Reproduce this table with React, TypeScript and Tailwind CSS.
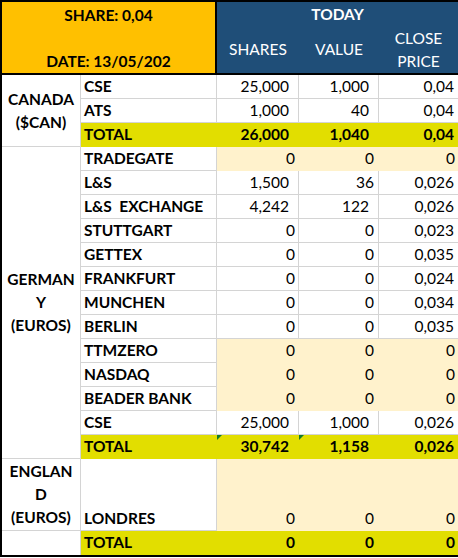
import React from "react";

type Row = {
  name: string;
  shares: string;
  value: string;
  price: string;
  fill?: "cream" | "total";
  marks?: boolean;
};

const canada: Row[] = [
  { name: "CSE", shares: "25,000", value: "1,000", price: "0,04" },
  { name: "ATS", shares: "1,000", value: "40", price: "0,04" },
  { name: "TOTAL", shares: "26,000", value: "1,040", price: "0,04", fill: "total" },
];

const germany: Row[] = [
  { name: "TRADEGATE", shares: "0", value: "0", price: "0", fill: "cream" },
  { name: "L&S", shares: "1,500", value: "36", price: "0,026" },
  { name: "L&S\u00a0 EXCHANGE", shares: "4,242", value: "122", price: "0,026" },
  { name: "STUTTGART", shares: "0", value: "0", price: "0,023" },
  { name: "GETTEX", shares: "0", value: "0", price: "0,035" },
  { name: "FRANKFURT", shares: "0", value: "0", price: "0,024" },
  { name: "MUNCHEN", shares: "0", value: "0", price: "0,034" },
  { name: "BERLIN", shares: "0", value: "0", price: "0,035" },
  { name: "TTMZERO", shares: "0", value: "0", price: "0", fill: "cream" },
  { name: "NASDAQ", shares: "0", value: "0", price: "0", fill: "cream" },
  { name: "BEADER BANK", shares: "0", value: "0", price: "0", fill: "cream" },
  { name: "CSE", shares: "25,000", value: "1,000", price: "0,026" },
  { name: "TOTAL", shares: "30,742", value: "1,158", price: "0,026", fill: "total", marks: true },
];

const padShares = (v: string) => (v === "0" ? "pr-[3px]" : "pr-[9px]");
const padValue = (v: string) => (v === "0" || v === "36" ? "pr-[4px]" : "pr-[9px]");
const padPrice = (v: string) => (v === "0" ? "pr-[3px]" : "pr-[4px]");

const fillClass = (fill?: Row["fill"]) =>
  fill === "total"
    ? "bg-[#E2DE00] border-[#E2DE00] font-bold"
    : fill === "cream"
    ? "bg-[#FFF2CC] border-[#FFF2CC]"
    : "bg-white border-[#D4D4D4]";

const Mark = () => (
  <span className="absolute left-0 top-0 h-0 w-0 border-t-[5px] border-r-[5px] border-t-[#137a2c] border-r-transparent" />
);

const DataRow = ({ row }: { row: Row }) => {
  const total = row.fill === "total";
  const numFill = fillClass(row.fill);
  const nameFill = total ? fillClass("total") : "bg-white border-[#D4D4D4]";
  return (
    <>
      <div className={`flex items-center border-b border-r pl-[3px] font-bold ${nameFill}`}>{row.name}</div>
      <div className={`relative flex items-center justify-end border-b border-r ${numFill} ${padShares(row.shares)}`}>
        {row.marks && <Mark />}
        {row.shares}
      </div>
      <div className={`relative flex items-center justify-end border-b border-r ${numFill} ${padValue(row.value)}`}>
        {row.marks && <Mark />}
        {row.value}
      </div>
      <div className={`flex items-center justify-end border-b ${numFill} ${padPrice(row.price)}`}>{row.price}</div>
    </>
  );
};

const Country = ({ lines, span }: { lines: string[]; span: string }) => (
  <div className={`flex flex-col items-center justify-center border-b border-r border-[#D4D4D4] bg-white font-bold leading-[23px] ${span}`}>
    {lines.map((l) => (
      <span key={l}>{l}</span>
    ))}
  </div>
);

export default function App() {
  return (
    <div
      className="w-[458px] h-[558px] overflow-hidden bg-white text-[15.5px] text-black"
      style={{ fontFamily: "Lato, 'Liberation Sans', sans-serif" }}
    >
      <div className="border-t-2 border-l-2 border-b-2 border-black">
        {/* Header */}
        <div className="flex h-[73px] border-b-2 border-black">
          <div className="flex w-[213px] flex-col justify-between bg-[#FFC000] font-bold">
            <div className="flex h-[27px] items-center justify-center">SHARE: 0,04</div>
            <div className="h-[24px] text-center leading-[24px]">DATE: 13/05/202</div>
          </div>
          <div className="w-[2px] bg-black" />
          <div className="flex flex-1 flex-col bg-[#1F4E78] text-white">
            <div className="flex h-[26px] items-center justify-center font-bold">TODAY</div>
            <div className="grid flex-1 grid-cols-[82px_80px_1fr]">
              <div className="flex items-center justify-center">SHARES</div>
              <div className="flex items-center justify-center">VALUE</div>
              <div className="flex flex-col items-center justify-center leading-[23px]">
                <span>CLOSE</span>
                <span>PRICE</span>
              </div>
            </div>
          </div>
        </div>

        {/* Body */}
        <div className="grid grid-cols-[79px_136px_82px_80px_79px] auto-rows-[24px]">
          <Country lines={["CANADA", "($CAN)"]} span="row-span-3" />
          {canada.map((r, i) => (
            <DataRow key={"c" + i} row={r} />
          ))}

          <Country lines={["GERMAN", "Y", "(EUROS)"]} span="row-span-13" />
          {germany.map((r, i) => (
            <DataRow key={"g" + i} row={r} />
          ))}

          <Country lines={["ENGLAN", "D", "(EUROS)"]} span="row-span-3" />
          <div className="row-span-3 flex items-end border-b border-r border-[#D4D4D4] bg-white pb-[3px] pl-[3px] font-bold leading-[18px]">
            LONDRES
          </div>
          <div className="row-span-3 flex items-end justify-end border-b border-r border-[#FFF2CC] bg-[#FFF2CC] pb-[3px] pr-[3px] leading-[18px]">
            0
          </div>
          <div className="row-span-3 flex items-end justify-end border-b border-r border-[#FFF2CC] bg-[#FFF2CC] pb-[3px] pr-[4px] leading-[18px]">
            0
          </div>
          <div className="row-span-3 flex items-end justify-end border-b border-[#FFF2CC] bg-[#FFF2CC] pb-[3px] pr-[3px] leading-[18px]">
            0
          </div>

          <div className="border-r border-[#D4D4D4] bg-white" />
          <DataRow row={{ name: "TOTAL", shares: "0", value: "0", price: "0", fill: "total" }} />
        </div>
      </div>
    </div>
  );
}
